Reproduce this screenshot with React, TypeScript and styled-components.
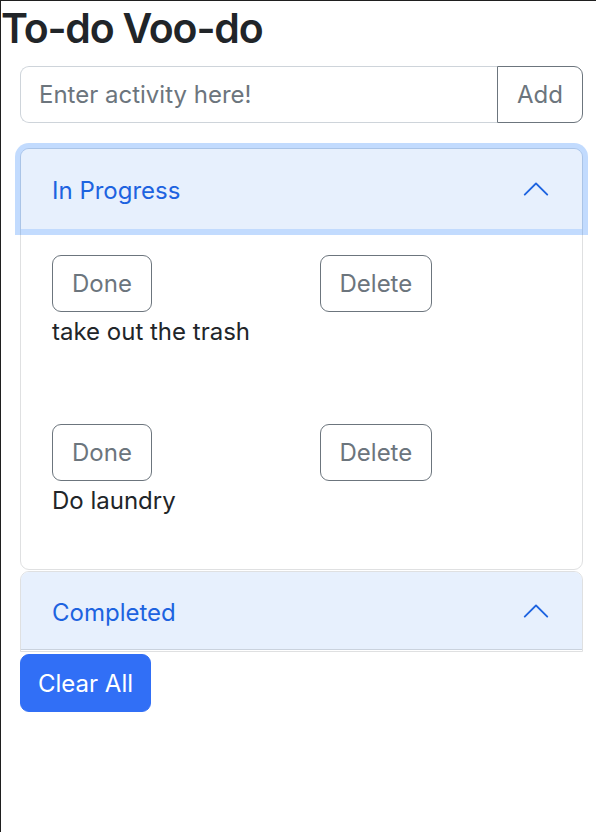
import React from "react";
import styled, { createGlobalStyle } from "styled-components";

const GlobalStyle = createGlobalStyle`
  html, body { margin: 0; padding: 0; background: #ffffff; }
  body {
    font-family: Inter, "Noto Sans", "Liberation Sans", sans-serif;
    color: #212529;
    -webkit-font-smoothing: antialiased;
  }
  * { box-sizing: border-box; }
`;

const Page = styled.div`
  min-height: 832px;
  border-left: 1px solid #1f1f1f;
  border-top: 1px solid #1f1f1f;
`;

const Title = styled.h1`
  margin: 0;
  padding: 2px 0 0 0;
  font-size: 41px;
  line-height: 50px;
  font-weight: 600;
  letter-spacing: -1.2px;
  color: #212529;
`;

const Content = styled.div`
  padding: 13px 13px 0 19px;
  display: flex;
  flex-direction: column;
`;

const InputGroup = styled.div`
  display: flex;
  height: 57px;
`;

const TextInput = styled.input`
  flex: 1;
  min-width: 0;
  height: 100%;
  padding: 0 18px;
  font: inherit;
  font-size: 24px;
  color: #212529;
  border: 1px solid #ced4da;
  border-right: none;
  border-radius: 9px 0 0 9px;
  outline: none;
  &::placeholder { color: #6c757d; opacity: 1; }
`;

const OutlineButton = styled.button<{ $joined?: boolean }>`
  height: 57px;
  padding: 0 19px;
  font-family: inherit;
  font-size: 24px;
  line-height: 36px;
  color: #6c757d;
  background: #ffffff;
  border: 1px solid #6c757d;
  border-radius: ${(p) => (p.$joined ? "0 9px 9px 0" : "9px")};
  cursor: pointer;
  justify-self: start;
`;

const Accordion = styled.div<{ $gap: number; $open: boolean }>`
  margin-top: ${(p) => p.$gap}px;
  border: 1px solid #dfe0e1;
  border-radius: ${(p) => (p.$open ? "9px" : "9px 9px 0 0")};
  background: #ffffff;
`;

const Header = styled.button<{ $focused?: boolean; $h: number }>`
  position: relative;
  z-index: ${(p) => (p.$focused ? 3 : 1)};
  display: flex;
  align-items: center;
  width: 100%;
  height: ${(p) => p.$h}px;
  padding: 3px 31px 0 31px;
  font-family: inherit;
  font-size: 24px;
  color: #1d63e0;
  background: #e7f0fd;
  border: none;
  border-radius: 8px 8px 0 0;
  text-align: left;
  cursor: pointer;
  box-shadow: ${(p) =>
    p.$focused
      ? "0 0 0 6px rgba(13, 110, 253, 0.25)"
      : "inset 0 -1px 0 rgba(0, 0, 0, 0.125)"};
`;

const Chevron = styled.svg`
  width: 30px;
  height: 30px;
  margin-left: auto;
  margin-top: -3px;
  transform: rotate(-180deg);
  flex-shrink: 0;
`;

const Body = styled.div`
  padding: 26px 31px 50px 31px;
  display: flex;
  flex-direction: column;
  gap: 74px;
`;

const Task = styled.div`
  display: flex;
  flex-direction: column;
`;

const ButtonRow = styled.div`
  display: grid;
  grid-template-columns: 1fr 1fr;
  column-gap: 36px;
`;

const TaskText = styled.p`
  margin: 2px 0 0 0;
  font-size: 24px;
  line-height: 36px;
  color: #212529;
`;

const ClosedBottom = styled.div`
  height: 1px;
`;

const PrimaryButton = styled.button`
  align-self: flex-start;
  margin-top: 2px;
  height: 58px;
  padding: 0 17px;
  font-family: inherit;
  font-size: 24px;
  color: #ffffff;
  background: #316ff6;
  border: 1px solid #316ff6;
  border-radius: 9px;
  cursor: pointer;
`;

const ChevronIcon = () => (
  <Chevron viewBox="0 0 16 16" aria-hidden="true">
    <path
      fill="#1d63e0"
      fillRule="evenodd"
      d="M1.646 4.646a.5.5 0 0 1 .708 0L8 10.293l5.646-5.647a.5.5 0 0 1 .708.708l-6 6a.5.5 0 0 1-.708 0l-6-6a.5.5 0 0 1 0-.708z"
    />
  </Chevron>
);

const tasks = ["take out the trash", "Do laundry"];

export default function App() {
  return (
    <>
      <GlobalStyle />
      <Page>
        <Title>To-do Voo-do</Title>
        <Content>
          <InputGroup>
            <TextInput placeholder="Enter activity here!" />
            <OutlineButton $joined>Add</OutlineButton>
          </InputGroup>

          <Accordion $gap={25} $open>
            <Header $focused $h={80}>
              In Progress
              <ChevronIcon />
            </Header>
            <Body>
              {tasks.map((t) => (
                <Task key={t}>
                  <ButtonRow>
                    <OutlineButton>Done</OutlineButton>
                    <OutlineButton>Delete</OutlineButton>
                  </ButtonRow>
                  <TaskText>{t}</TaskText>
                </Task>
              ))}
            </Body>
          </Accordion>

          <Accordion $gap={1} $open={false}>
            <Header $h={78}>
              Completed
              <ChevronIcon />
            </Header>
            <ClosedBottom />
          </Accordion>

          <PrimaryButton>Clear All</PrimaryButton>
        </Content>
      </Page>
    </>
  );
}
